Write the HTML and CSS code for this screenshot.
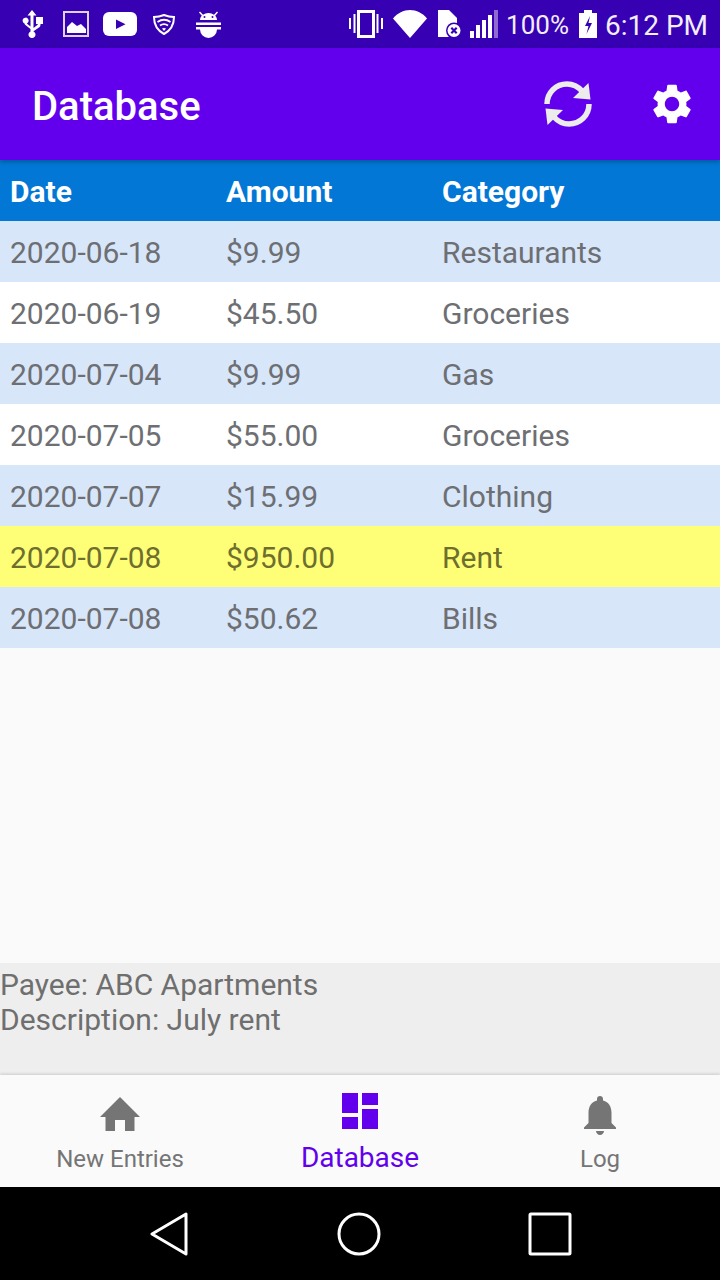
FILE: index.html
```html
<!DOCTYPE html>
<html lang="en">
<head>
<meta charset="utf-8">
<title>Database</title>
<link rel="stylesheet" href="styles.css">
</head>
<body>
<div class="phone">
  <div class="status">
    <div class="status-left">
      <svg class="ic usb" viewBox="0 0 21 28"><path d="M10 0l4.500 5.500h-3V18l3.500-2.800c.8-.6 1-1 1-1.700V14h-2V7h7v7h-2.500v.5c0 1.300-.5 2.200-1.500 3L11.500 21.200v.2a3.500 3.500 0 1 1-3 0V19L4 15.500c-1-.8-1.500-1.500-1.500-2.100a3 3 0 1 1 2.500-.1c0 .4.300.7.700 1L8.500 16.500v-11h-3z"/></svg>
      <svg class="ic pic" viewBox="0 0 26 26"><rect x="1" y="1" width="24" height="24" fill="none" stroke="#dcd2f2" stroke-width="2"/><path d="M4 22v-6l5-5 5 4 4-2 5 5v4z" fill="#fff"/></svg>
      <svg class="ic yt" viewBox="0 0 34 24"><rect width="34" height="24" rx="6"/><path d="M13 7.500l9.500 4.700-9.500 4.700z" fill="#3700b3"/></svg>
      <svg class="ic shield" viewBox="0 0 22 21"><path d="M11 1c3 1.200 6.500 2 10 2 0 7-3.500 13.500-10 17C4.500 16.500 1 10 1 3c3.500 0 7-.8 10-2z" fill="none" stroke="#fff" stroke-width="2"/><path d="M4.500 8c4-2.800 9-2.800 13 0M7 11.500c2.500-1.800 5.500-1.800 8 0" fill="none" stroke="#fff" stroke-width="1.800"/><path d="M9 14.500c1.200-.8 2.800-.8 4 0L11 17z" fill="#fff"/></svg>
      <svg class="ic bug" viewBox="0 0 25 27"><path d="M4 .5l3 3.200A9 9 0 0 1 12.500 2a9 9 0 0 1 5.500 1.700l3-3.200 1 .9-2.800 3.300c1.200 1.300 1.800 2.800 1.800 4.300H4c0-1.500.6-3 1.800-4.300L3 1.400z"/><circle cx="8.500" cy="6" r="1" fill="#3700b3"/><circle cx="16.500" cy="6" r="1" fill="#3700b3"/><path d="M0 11.500h25v2.500H0zM0 16h25v2.500h-4A8.700 8.700 0 0 1 12.500 27 8.700 8.700 0 0 1 4 18.500H0z"/></svg>
    </div>
    <div class="status-right">
      <svg class="ic vib" viewBox="0 0 34 28"><path d="M9.500 1.500h15v25h-15z" fill="none" stroke="#fff" stroke-width="3"/><path d="M1 8v11M5.500 4v19M28.500 4v19M33 8v11" stroke="#fff" stroke-width="2" fill="none"/></svg>
      <svg class="ic wifi" viewBox="0 0 34 28"><path d="M0 8.500C4.500 3 10.500 0 17 0s12.500 3 17 8.500L17 28z"/></svg>
      <svg class="ic file" viewBox="0 0 24 28"><path d="M0 0h11l8 8v19H0z"/><circle cx="16" cy="20.500" r="8" fill="#3700b3"/><circle cx="16" cy="20.500" r="6.500"/><path d="M13.300 17.800l5.400 5.400M18.700 17.800l-5.400 5.400" stroke="#3700b3" stroke-width="2.200"/></svg>
      <svg class="ic sig" viewBox="0 0 28 28"><path d="M0 21h4v7H0zM6 15h4v13H6zM12 10h4v18h-4zM18 5h4v23h-4z"/><path d="M24 0h4v28h-4z" fill="#8f6ad2"/></svg>
      <span class="pct">100%</span>
      <svg class="ic bat" viewBox="0 0 18 28"><path d="M5 0h8v3h5v25H0V3h5z"/><path d="M11 6l-5 10h3.500L7.500 24l5.500-11H9.500z" fill="#3700b3"/></svg>
      <span class="time">6:12 PM</span>
    </div>
  </div>
  <header class="appbar">
    <h1 class="title">Database</h1>
    <svg class="refresh" viewBox="0 0 48 48"><path d="M3 24C3 12.500 12 4 23 4c6 0 11 2.500 15 7" fill="none" stroke="#ececec" stroke-width="5.500"/><path d="M44.500 3l2 16.500L29 18z"/><path d="M45 24c0 11.500-9 20-20 20-6 0-11-2.500-15-7" fill="none" stroke="#ececec" stroke-width="5.500"/><path d="M3.500 45l-2-16.500L19 30z"/></svg>
    <svg class="gear" viewBox="0 0 24 24"><path d="M19.140 12.940c.04-.3.060-.61.060-.94 0-.32-.020-.64-.070-.94l2.030-1.580c.18-.14.230-.41.120-.61l-1.920-3.320c-.12-.22-.37-.29-.59-.22l-2.390.96c-.5-.38-1.030-.7-1.620-.94L14.400 2.810c-.04-.24-.24-.41-.48-.41h-3.840c-.24 0-.43.17-.47.41L9.250 5.350c-.59.240-1.130.570-1.620.94L5.240 5.330c-.22-.08-.47 0-.59.220L2.740 8.870c-.12.210-.08.470.12.610l2.030 1.580c-.05.3-.09.630-.09.940s.02.640.07.940l-2.030 1.580c-.18.140-.23.410-.12.610l1.920 3.320c.12.220.37.290.59.220l2.390-.96c.5.380 1.030.7 1.620.94l.36 2.540c.05.240.24.410.48.410h3.840c.24 0 .44-.17.470-.41l.36-2.540c.59-.24 1.130-.56 1.620-.94l2.390.96c.22.080.47 0 .59-.22l1.920-3.320c.12-.22.070-.47-.12-.61l-2.010-1.580zM12 15.600c-1.980 0-3.600-1.620-3.600-3.600s1.620-3.600 3.600-3.600 3.600 1.620 3.600 3.600-1.620 3.600-3.600 3.600z"/></svg>
  </header>
  <main class="content">
    <div class="row head"><span>Date</span><span>Amount</span><span>Category</span></div>
    <div class="row alt"><span>2020-06-18</span><span>$9.99</span><span>Restaurants</span></div>
    <div class="row"><span>2020-06-19</span><span>$45.50</span><span>Groceries</span></div>
    <div class="row alt"><span>2020-07-04</span><span>$9.99</span><span>Gas</span></div>
    <div class="row"><span>2020-07-05</span><span>$55.00</span><span>Groceries</span></div>
    <div class="row alt"><span>2020-07-07</span><span>$15.99</span><span>Clothing</span></div>
    <div class="row sel"><span>2020-07-08</span><span>$950.00</span><span>Rent</span></div>
    <div class="row alt"><span>2020-07-08</span><span>$50.62</span><span>Bills</span></div>
  </main>
  <section class="detail">
    <div>Payee: ABC Apartments</div>
    <div>Description: July rent</div>
  </section>
  <nav class="nav">
    <div class="tab">
      <svg class="nav-ic home-ic" viewBox="0 0 40 34"><path d="M20 0L0 20h5.500v14h9.500V23h10v11h9.500V20H40z"/></svg>
      <span>New Entries</span>
    </div>
    <div class="tab active">
      <svg class="nav-ic dash-ic" viewBox="0 0 36 36"><path d="M0 0h16v20H0zM20 0h16v12H20zM20 16h16v20H20zM0 24h16v12H0z"/></svg>
      <span>Database</span>
    </div>
    <div class="tab">
      <svg class="nav-ic bell-ic" viewBox="0 0 32 39"><path d="M16 0c1.800 0 3 1.300 3 3v1.500C25 6 27.500 11 27.500 17v10l4.500 4.500V33H0v-1.500L4.500 27V17C4.500 11 7 6 13 4.500V3c0-1.700 1.200-3 3-3zM12 35h8c0 2-2 4-4 4s-4-2-4-4z"/></svg>
      <span>Log</span>
    </div>
  </nav>
  <div class="sysbar">
    <svg class="sys back" viewBox="0 0 38 44"><path d="M36 2v40L2 22z" fill="none" stroke="#fff" stroke-width="3" stroke-linejoin="round"/></svg>
    <svg class="sys home" viewBox="0 0 44 44"><circle cx="22" cy="22" r="20" fill="none" stroke="#fff" stroke-width="3"/></svg>
    <svg class="sys recent" viewBox="0 0 44 44"><rect x="2" y="2" width="40" height="40" rx="1" fill="none" stroke="#fff" stroke-width="3"/></svg>
  </div>
</div>
</body>
</html>
```
FILE: styles.css
```css
* { box-sizing: border-box; }
html, body { margin: 0; padding: 0; }
body { font-family: Roboto, "Liberation Sans", sans-serif; background: #fafafa; }
.phone { width: 720px; height: 1280px; display: flex; flex-direction: column; overflow: hidden; background: #fafafa; }

.status { height: 48px; flex: none; background: #3700b3; color: #fff; display: flex; justify-content: space-between; align-items: center; padding: 0 12px 0 22px; }
.status-left, .status-right { display: flex; align-items: center; }
.ic { fill: #fff; display: block; flex: none; }
.usb { width: 21px; height: 28px; }
.pic { width: 26px; height: 26px; margin-left: 20px; }
.yt { width: 34px; height: 24px; margin-left: 14px; }
.shield { width: 22px; height: 21px; margin-left: 16px; }
.bug { width: 25px; height: 27px; margin-left: 21px; }
.vib { width: 34px; height: 28px; }
.wifi { width: 34px; height: 28px; margin-left: 10px; }
.file { width: 24px; height: 28px; margin-left: 11px; }
.sig { width: 28px; height: 28px; margin-left: 8px; }
.pct { font-size: 26px; margin: 2px 0 0 8px; color: #f2eefb; }
.bat { width: 18px; height: 28px; margin-left: 10px; }
.time { font-size: 28px; margin: 2px 0 0 8px; color: #f2eefb; }

.appbar { height: 112px; flex: none; background: #6200ee; color: #fff; display: flex; align-items: center; padding: 0 28px 0 32px; position: relative; z-index: 1; box-shadow: 0 2px 4px rgba(0,0,0,.25); }
.title { font-size: 40px; font-weight: 500; margin: 4px 0 0; flex: 1; }
.refresh { width: 48px; height: 48px; fill: #ececec; margin-right: 56px; }
.gear { width: 48px; height: 48px; fill: #fff; margin-right: -4px; }

.content { flex: 1; }
.row { height: 61px; display: grid; grid-template-columns: 216px 216px 1fr; align-items: center; padding: 2px 0 0 10px; font-size: 30px; color: #6d6f73; background: #fff; }
.row.alt { background: #d8e6fa; }
.row.sel { background: #ffff77; color: #6e6f2e; }
.row.head { background: #0277d6; color: #fff; font-weight: 700; }

.detail { height: 112px; flex: none; background: #eeeeee; color: #6f6f6f; font-size: 30px; line-height: 35px; padding: 4px 0 0; }

.nav { height: 112px; flex: none; background: #fafafa; display: grid; grid-template-columns: repeat(3, 1fr); box-shadow: 0 -1px 3px rgba(0,0,0,.15); position: relative; }
.tab { display: flex; flex-direction: column; align-items: center; color: #757575; font-size: 24px; }
.tab span { line-height: 30px; }
.nav-ic { fill: #757575; display: block; flex: none; }
.home-ic { width: 40px; height: 34px; margin-top: 22px; margin-bottom: 13px; }
.bell-ic { width: 32px; height: 39px; margin-top: 21px; margin-bottom: 9px; }
.tab.active { color: #6200ee; font-size: 28px; }
.tab.active span { line-height: 36px; }
.dash-ic { width: 36px; height: 36px; margin-top: 18px; margin-bottom: 11px; }
.tab.active .nav-ic { fill: #6200ee; }

.sysbar { height: 93px; flex: none; background: #000; display: flex; align-items: center; padding-left: 150px; }
.sys { display: block; flex: none; }
.back { width: 38px; height: 44px; }
.home { width: 44px; height: 44px; margin-left: 149px; }
.recent { width: 44px; height: 44px; margin-left: 147px; }
```
